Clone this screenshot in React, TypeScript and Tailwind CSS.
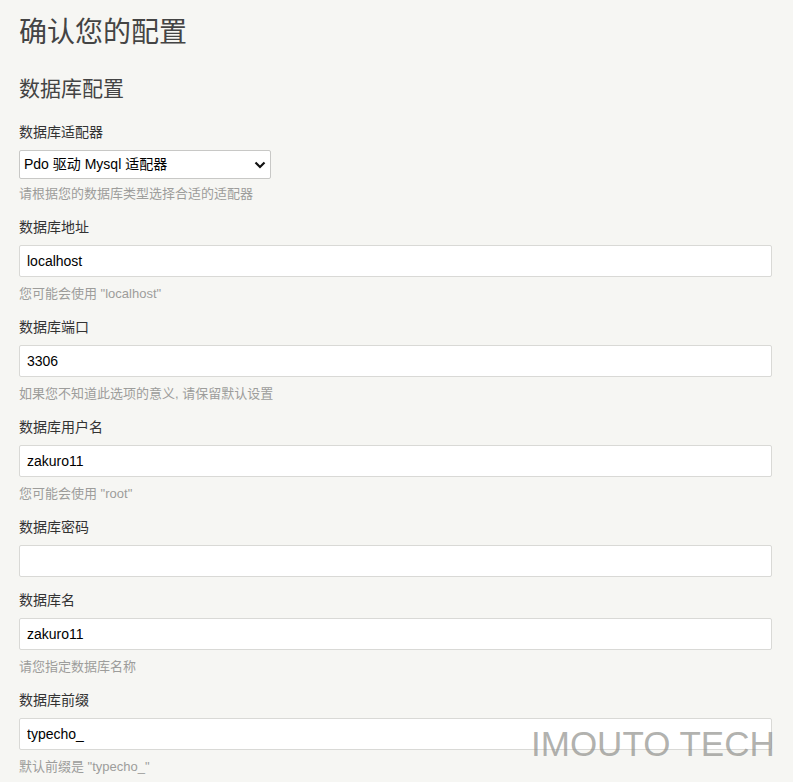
import React from 'react';

const font = { fontFamily: '"Liberation Sans", "Noto Sans CJK SC", sans-serif' };

type Field = {
  label: string;
  value: string;
  desc?: string;
};

const fields: Field[] = [
  { label: '数据库地址', value: 'localhost', desc: '您可能会使用 "localhost"' },
  { label: '数据库端口', value: '3306', desc: '如果您不知道此选项的意义, 请保留默认设置' },
  { label: '数据库用户名', value: 'zakuro11', desc: '您可能会使用 "root"' },
  { label: '数据库密码', value: '' },
  { label: '数据库名', value: 'zakuro11', desc: '请您指定数据库名称' },
  { label: '数据库前缀', value: 'typecho_', desc: '默认前缀是 "typecho_"' },
];

const Chevron = () => (
  <svg width="12" height="8" viewBox="0 0 12 8" className="absolute right-[5px] top-[11px] pointer-events-none">
    <path d="M1.5 1.5 L6 6 L10.5 1.5" fill="none" stroke="#111" strokeWidth="2.2" />
  </svg>
);

export default function App() {
  return (
    <div className="relative min-h-[782px] bg-[#f6f6f3] overflow-hidden" style={font}>
      <div className="pl-[19px] pr-[21px] pt-[13px] pb-10">
        <h1 className="text-[28px] leading-[40px] text-[#444] font-normal">确认您的配置</h1>
        <h2 className="mt-[21px] text-[21px] leading-[30px] text-[#444] font-normal">数据库配置</h2>

        <div className="mt-[18px] flex flex-col gap-[13px]">
          {/* adapter */}
          <div className="flex flex-col">
            <label className="text-[14px] leading-[20px] text-[#333]">数据库适配器</label>
            <div className="relative mt-[8px] w-[252px] h-[29px]">
              <select
                className="appearance-none w-full h-full bg-white border border-[#c8c8c6] rounded-[2px] pl-[4px] text-[14px] text-black outline-none"
                style={font}
                defaultValue="pdo"
              >
                <option value="pdo">Pdo 驱动 Mysql 适配器</option>
              </select>
              <Chevron />
            </div>
            <p className="mt-[5px] text-[13px] leading-[20px] text-[#9d9d9b]">请根据您的数据库类型选择合适的适配器</p>
          </div>

          {fields.map(f => (
            <div key={f.label} className="flex flex-col">
              <label className="text-[14px] leading-[20px] text-[#333]">{f.label}</label>
              <input
                type="text"
                readOnly
                value={f.value}
                className="mt-[8px] w-full h-[32px] bg-white border border-[#d9d9d6] rounded-[2px] px-[7px] text-[14px] text-black outline-none"
                style={font}
              />
              {f.desc && (
                <p className="mt-[7px] text-[13px] leading-[20px] text-[#9d9d9b]">{f.desc}</p>
              )}
            </div>
          ))}
        </div>
      </div>

      <div className="absolute left-[531px] top-[722px] text-[35px] leading-[44px] text-[#8f8f8b]/70 pointer-events-none" style={{ fontFamily: '"Liberation Sans", sans-serif' }}>
        IMOUTO TECH
      </div>
    </div>
  );
}
